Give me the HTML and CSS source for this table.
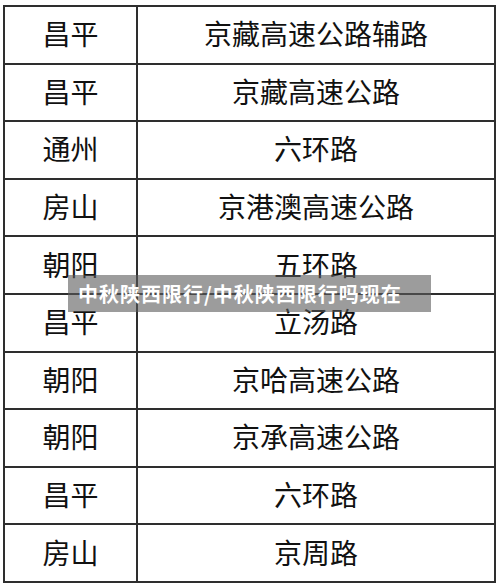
FILE: index.html
```html
<!DOCTYPE html>
<html lang="zh-CN">
<head>
<meta charset="utf-8">
<title>中秋陕西限行</title>
<link rel="stylesheet" href="styles.css">
</head>
<body>
<div class="page">
  <table class="roads">
    <tr><td class="area">昌平</td><td class="road">京藏高速公路辅路</td></tr>
    <tr><td class="area">昌平</td><td class="road">京藏高速公路</td></tr>
    <tr><td class="area">通州</td><td class="road">六环路</td></tr>
    <tr><td class="area">房山</td><td class="road">京港澳高速公路</td></tr>
    <tr><td class="area">朝阳</td><td class="road">五环路</td></tr>
    <tr><td class="area">昌平</td><td class="road">立汤路</td></tr>
    <tr><td class="area">朝阳</td><td class="road">京哈高速公路</td></tr>
    <tr><td class="area">朝阳</td><td class="road">京承高速公路</td></tr>
    <tr><td class="area">昌平</td><td class="road">六环路</td></tr>
    <tr><td class="area">房山</td><td class="road">京周路</td></tr>
  </table>
  <div class="banner">中秋陕西限行/中秋陕西限行吗现在</div>
</div>
</body>
</html>
```
FILE: styles.css
```css
html, body {
  margin: 0;
  padding: 0;
  background: #ffffff;
}
.page {
  position: relative;
  width: 500px;
  height: 587px;
  padding: 5px 0 0 3px;
  box-sizing: border-box;
}
.roads {
  border-collapse: collapse;
  width: 493px;
  height: 578px;
  font-family: "Noto Sans CJK SC", "Noto Sans", sans-serif;
  font-size: 28px;
  color: #111111;
  table-layout: fixed;
}
.roads td {
  border: 2px solid #2e2e2e;
  text-align: center;
  vertical-align: middle;
  padding: 0 0 3px 0;
  height: 52px;
  line-height: 1;
}
.roads .area {
  width: 131px;
}
.banner {
  position: absolute;
  left: 68px;
  top: 275px;
  width: 363px;
  height: 37px;
  box-sizing: border-box;
  padding-left: 10px;
  background: rgba(90, 90, 90, 0.6);
  color: #ffffff;
  font-family: "Noto Sans CJK SC", "Noto Sans", sans-serif;
  font-weight: 700;
  font-size: 20px;
  letter-spacing: 1px;
  line-height: 37px;
  white-space: nowrap;
}
```
